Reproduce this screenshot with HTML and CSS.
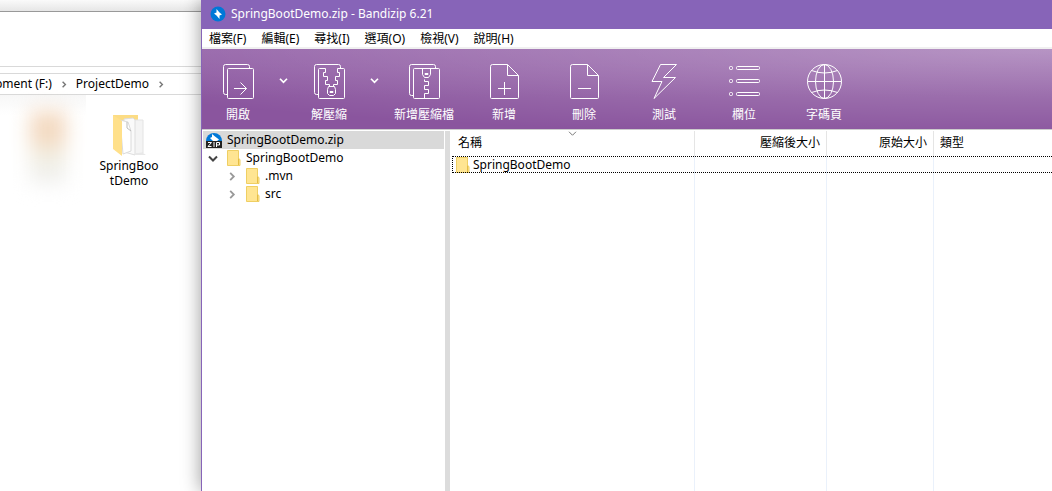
FILE: index.html
```html
<!DOCTYPE html>
<html lang="zh-Hant">
<head>
    <meta charset="UTF-8">
    <meta name="viewport" content="width=device-width, initial-scale=1.0">
    <title>SpringBootDemo.zip - Bandizip 6.21</title>
    <link rel="stylesheet" href="styles.css">
</head>
<body>
    <!-- Shared icons -->
    <svg class="sprite" aria-hidden="true">
        <symbol id="folder" viewBox="0 0 14 16">
            <path d="M0.500 0.500h11v8l1.500 1v6h-12.500z" fill="#ffe592" stroke="#efcf63"/>
            <path d="M11.500 8.500v6.500" stroke="#e5bd45" fill="none"/>
        </symbol>
        <symbol id="chevron-right" viewBox="0 0 8 10">
            <path d="M2 1l4 4-4 4"/>
        </symbol>
        <symbol id="chevron-down" viewBox="0 0 10 8">
            <path d="M1 2l4 4 4-4"/>
        </symbol>
        <symbol id="bolt" viewBox="0 0 16 16">
            <circle cx="8" cy="8" r="7.500" fill="#0078d7"/>
            <path d="M6.500 3l3 3.500 2.500 2-2.500 1v3.500l-3-3.500-2.500-2 2.500-1z" fill="#fff"/>
        </symbol>
    </svg>

    <div class="desktop">
        <!-- Explorer window -->
        <section class="explorer">
            <div class="explorer-top"></div>
            <div class="explorer-ribbon"></div>
            <nav class="address">
                <a href="#">Development (F:)</a>
                <svg class="chevron"><use href="#chevron-right"/></svg>
                <a href="#">ProjectDemo</a>
                <svg class="chevron"><use href="#chevron-right"/></svg>
            </nav>
            <div class="files">
                <div class="hidden-file"><div class="smudge"></div></div>
                <a class="file" href="#">
                    <svg width="34" height="42" viewBox="0 0 34 42">
                        <path d="M1 0h25v8H1z" fill="#fcdc84"/>
                        <path d="M22 5h9v33l-9 1z" fill="#f4f4f4" stroke="#e4e4e4"/>
                        <path d="M12 4l9-1 2 2v35l-11-3z" fill="#fafafa" stroke="#dedede"/>
                        <path d="M8 5l8 2 3 9v20l-8 3z" fill="#fff" stroke="#dadada"/>
                        <path d="M15 7v6l4 3" fill="none" stroke="#bbb"/>
                        <path d="M1 0l9 6v35l-9-7z" fill="#ffe08a"/>
                        <path d="M23 40h11l-3-2h-8z" fill="#e8e8e8"/>
                    </svg>
                    <span>SpringBootDemo</span>
                </a>
            </div>
        </section>

        <!-- Bandizip window -->
        <main class="app">
            <header class="title-bar">
                <svg width="16" height="16"><use href="#bolt"/></svg>
                <h1>SpringBootDemo.zip - Bandizip 6.21</h1>
            </header>

            <nav class="menu">
                <button>檔案(F)</button>
                <button>編輯(E)</button>
                <button>尋找(I)</button>
                <button>選項(O)</button>
                <button>檢視(V)</button>
                <button>說明(H)</button>
            </nav>

            <div class="toolbar">
                <button class="tool narrow">
                    <svg viewBox="0 0 36 36">
                        <path d="M7 30.500H5.500a2 2 0 0 1-2-2v-26a2 2 0 0 1 2-2h22a2 2 0 0 1 2 2V4"/>
                        <rect x="7.500" y="4.500" width="26" height="30" rx="1"/>
                        <path d="M14 24.500h12.500M20.500 18.500l6 6-6 6"/>
                    </svg>
                    開啟
                </button>
                <button class="drop" aria-label="開啟選單"><svg class="chevron-down"><use href="#chevron-down"/></svg></button>
                <button class="tool narrow">
                    <svg viewBox="0 0 36 36">
                        <path d="M7 30.500H5.500a2 2 0 0 1-2-2v-26a2 2 0 0 1 2-2h22a2 2 0 0 1 2 2v2"/>
                        <path d="M14.500 4.500h-6a1 1 0 0 0-1 1v28a1 1 0 0 0 1 1h24a1 1 0 0 0 1-1v-28a1 1 0 0 0-1-1h-6"/>
                        <path d="M14.500 4.500v4h-2v4h4v4h-2v4h4v2M26.500 4.500v4h2v4h-4v4h2v4h-4v2"/>
                        <path d="M17.500 22.500h6l1 3v4l-2 2h-4l-2-2v-4z"/>
                        <path d="M19 27.500h3v1h-3z"/>
                    </svg>
                    解壓縮
                </button>
                <button class="drop" aria-label="解壓縮選單"><svg class="chevron-down"><use href="#chevron-down"/></svg></button>
                <button class="tool">
                    <svg viewBox="0 0 36 36">
                        <path d="M7 31.500H5.500a2 2 0 0 1-2-2v-27a2 2 0 0 1 2-2h22a2 2 0 0 1 2 2V4"/>
                        <rect x="7.500" y="4.500" width="26" height="30" rx="1"/>
                        <path d="M16.500 4.500v6l2 3h4l2-3v-6M19 9.500h3v1h-3zM18.500 15.500v2h4v4h-4v4h4v4h-4v4.500"/>
                    </svg>
                    新增壓縮檔
                </button>
                <button class="tool">
                    <svg viewBox="0 0 36 36">
                        <path d="M21.500.5h-15a2 2 0 0 0-2 2v31a1 1 0 0 0 1 1h26a1 1 0 0 0 1-1v-22l-11-11v11h11M12 24.500h13M18.500 18v13"/>
                    </svg>
                    新增
                </button>
                <button class="tool">
                    <svg viewBox="0 0 36 36">
                        <path d="M21.500.5h-15a2 2 0 0 0-2 2v31a1 1 0 0 0 1 1h26a1 1 0 0 0 1-1v-22l-11-11v11h11M12 24.500h13"/>
                    </svg>
                    刪除
                </button>
                <button class="tool">
                    <svg viewBox="0 0 36 36">
                        <path d="M14.500.5h16l-13 13h12L8 34.500l8-17H6z"/>
                    </svg>
                    測試
                </button>
                <button class="tool">
                    <svg viewBox="0 0 36 36">
                        <rect x="3.500" y="2.500" width="3" height="3" rx="1"/>
                        <rect x="10.500" y="2.500" width="23" height="3" rx="1"/>
                        <rect x="3.500" y="15.500" width="3" height="3" rx="1"/>
                        <rect x="10.500" y="15.500" width="23" height="3" rx="1"/>
                        <rect x="3.500" y="28.500" width="3" height="3" rx="1"/>
                        <rect x="10.500" y="28.500" width="23" height="3" rx="1"/>
                    </svg>
                    欄位
                </button>
                <button class="tool">
                    <svg viewBox="0 0 36 36">
                        <circle cx="18.500" cy="17.500" r="17"/>
                        <ellipse cx="18.500" cy="17.500" rx="9" ry="17"/>
                        <path d="M1.500 17.500h34M18.500.5v34M5.500 6.500q13 5 26 0M5.500 28.500q13-5 26 0"/>
                    </svg>
                    字碼頁
                </button>
            </div>

            <div class="content">
                <ul class="tree">
                    <li class="root">
                        <svg width="16" height="18" viewBox="0 0 16 18">
                            <path d="M0 10a8 8 0 0 1 16 0z" fill="#0078d7"/>
                            <path d="M6 3l3 2.500 4 3-2 1.500h-4l-3-3 2-1z" fill="#fff"/>
                            <path d="M0 10h16v7H0z" fill="#222"/>
                            <path d="M2 11.500h3.500L2 15.500h3.500M8 11v5M10.500 16v-4.500h3v2.500h-3" fill="none" stroke="#fff"/>
                        </svg>
                        SpringBootDemo.zip
                    </li>
                    <li class="level-1">
                        <svg class="arrow open"><use href="#chevron-down"/></svg>
                        <svg class="folder"><use href="#folder"/></svg>
                        SpringBootDemo
                    </li>
                    <li class="level-2">
                        <svg class="arrow"><use href="#chevron-right"/></svg>
                        <svg class="folder"><use href="#folder"/></svg>
                        .mvn
                    </li>
                    <li class="level-2">
                        <svg class="arrow"><use href="#chevron-right"/></svg>
                        <svg class="folder"><use href="#folder"/></svg>
                        src
                    </li>
                </ul>

                <div class="list">
                    <table>
                        <colgroup>
                            <col class="col-name">
                            <col class="col-packed">
                            <col class="col-size">
                            <col>
                        </colgroup>
                        <thead>
                            <tr>
                                <th>名稱<svg class="sort"><use href="#chevron-down"/></svg></th>
                                <th class="number">壓縮後大小</th>
                                <th class="number">原始大小</th>
                                <th>類型</th>
                            </tr>
                        </thead>
                        <tbody>
                            <tr class="focused">
                                <td><span class="name"><svg class="folder"><use href="#folder"/></svg>SpringBootDemo</span></td>
                                <td></td>
                                <td></td>
                                <td></td>
                            </tr>
                            <tr class="filler">
                                <td></td>
                                <td></td>
                                <td></td>
                                <td></td>
                            </tr>
                        </tbody>
                    </table>
                </div>
            </div>
        </main>
    </div>
</body>
</html>
```

FILE: styles.css
```css
/* General Reset */
* {
    margin: 0;
    padding: 0;
    box-sizing: border-box;
}

body {
    font-family: "Noto Sans", "Noto Sans CJK TC", sans-serif;
    font-size: 12px;
    line-height: 18px;
    color: #000;
    background: #fff;
}

button {
    font: inherit;
    color: inherit;
    background: none;
    border: none;
    white-space: nowrap;
}

a {
    color: inherit;
    text-decoration: none;
}

.sprite {
    position: absolute;
    width: 0;
    height: 0;
}

.desktop {
    display: flex;
    height: 100vh;
    overflow: hidden;
}

/* Explorer window */
.explorer {
    flex: 0 0 201px;
    min-width: 0;
    overflow: hidden;
}

.explorer-top {
    height: 12px;
    background: linear-gradient(#fafafa, #e6e6e6);
    border-bottom: 1px solid #999;
}

.explorer-ribbon {
    height: 55px;
    border-bottom: 1px solid #d9d9d9;
}

.address {
    display: flex;
    align-items: center;
    justify-content: flex-end;
    gap: 8px;
    height: 22px;
    margin-top: 6px;
    padding-right: 36px;
    border-top: 1px solid #d9d9d9;
    border-bottom: 1px solid #d9d9d9;
    white-space: nowrap;
}

.chevron {
    flex: none;
    width: 8px;
    height: 7px;
    fill: none;
    stroke: #777;
    stroke-width: 2;
}

.files {
    display: flex;
}

.hidden-file {
    width: 86px;
    height: 96px;
    background: linear-gradient(#f7f7f7, #fff 20px);
}

.smudge {
    width: 36px;
    height: 72px;
    margin: 16px 0 0 30px;
    background: linear-gradient(#f3d9c0 40%, #f2f0e4 60%, #eee);
    filter: blur(10px);
}

.file {
    display: flex;
    flex-direction: column;
    align-items: center;
    gap: 1px;
    width: 86px;
    padding: 20px 12px 0;
    line-height: 15px;
    text-align: center;
    word-break: break-all;
}

/* Bandizip window */
.app {
    display: flex;
    flex: 1;
    flex-direction: column;
    min-width: 0;
    position: relative;
    background: #fff;
    border-left: 1px solid #8764b8;
    box-shadow: 0 0 18px rgba(0, 0, 0, 0.4);
}

.title-bar {
    display: flex;
    align-items: center;
    gap: 5px;
    height: 29px;
    padding: 0 8px 2px;
    color: #fff;
    background: #8764b8;
}

.title-bar h1 {
    font-size: 12px;
    font-weight: normal;
}

.menu {
    display: flex;
    gap: 1px;
    height: 20px;
    border-bottom: 2px solid #f0f0f0;
}

.menu button {
    padding: 1px 7px 0;
}

.toolbar {
    display: flex;
    height: 81px;
    color: #fff;
    background:
        radial-gradient(130% 110% at 100% 0, rgba(255, 255, 255, 0.32), transparent),
        linear-gradient(#9462a8, #8a559e 60%);
    border-bottom: 1px solid #ccc;
}

.tool {
    display: flex;
    flex-direction: column;
    align-items: center;
    gap: 6px;
    width: 80px;
    padding-top: 15px;
}

.tool.narrow {
    width: 72px;
}

.tool svg {
    width: 36px;
    height: 36px;
    fill: none;
    stroke: #fff;
}

.drop {
    display: flex;
    justify-content: center;
    width: 19px;
    padding-top: 28px;
}

.chevron-down {
    width: 9px;
    height: 7px;
    fill: none;
    stroke: #fff;
    stroke-width: 2;
}

.content {
    display: flex;
    flex: 1;
    min-height: 0;
    padding-top: 1px;
}

/* Folder tree */
.tree {
    flex: 0 0 248px;
    list-style: none;
    border-right: 5px solid #dcdcdc;
}

.tree li {
    display: flex;
    align-items: center;
    gap: 5px;
    height: 18px;
}

.tree .root {
    margin: 0 1px;
    padding-left: 3px;
    background: #d9d9d9;
}

.tree .level-1 {
    padding-left: 6px;
}

.tree .level-2 {
    padding-left: 25px;
}

.arrow {
    width: 10px;
    height: 9px;
    margin-right: 4px;
    fill: none;
    stroke: #999;
    stroke-width: 2;
}

.arrow.open {
    stroke: #444;
}

.folder {
    width: 14px;
    height: 16px;
}

/* File list */
.list {
    flex: 1;
    min-width: 0;
    padding-left: 2px;
    overflow: hidden;
}

table {
    width: calc(100% + 4px);
    height: 100%;
    table-layout: fixed;
    border-spacing: 0;
}

.col-name {
    width: 243px;
}

.col-packed {
    width: 132px;
}

.col-size {
    width: 107px;
}

th {
    position: relative;
    height: 25px;
    padding: 0 6px 2px;
    font-weight: normal;
    text-align: left;
    border-right: 1px solid #e5e5e5;
}

th.number {
    text-align: right;
}

.sort {
    position: absolute;
    top: -1px;
    left: 48%;
    width: 9px;
    height: 7px;
    fill: none;
    stroke: #666;
}

td {
    height: 17px;
    border-right: 1px solid #eaf1fb;
}

th:last-child,
td:last-child {
    border-right: none;
}

.focused {
    outline: 1px dotted #000;
    outline-offset: -1px;
}

.name {
    display: flex;
    align-items: center;
    gap: 3px;
    height: 17px;
    padding-left: 4px;
}

.filler td {
    height: auto;
}
```
